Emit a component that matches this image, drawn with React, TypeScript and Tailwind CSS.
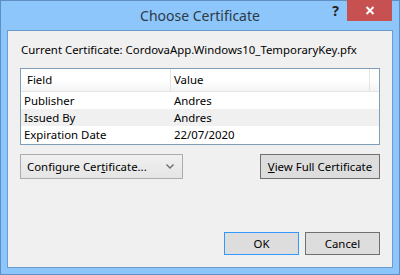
import React from 'react';

const rows = [
  { field: 'Publisher', value: 'Andres' },
  { field: 'Issued By', value: 'Andres' },
  { field: 'Expiration Date', value: '22/07/2020' },
];

const App: React.FC = () => {
  return (
    <div
      className="w-[400px] h-[275px] bg-[#8cc6fa] border border-[#5f8fc0] px-[6px] pb-[6px] flex flex-col text-[11.4px] text-black"
      style={{ fontFamily: '"Noto Sans", "Open Sans", sans-serif' }}
    >
      {/* title bar */}
      <div className="relative h-[29px] flex items-center justify-center shrink-0">
        <span className="text-[14px] text-[#2e3a46] leading-none pt-[1px]">Choose Certificate</span>
        <span className="absolute right-[54px] top-[3px] text-[14px] font-bold text-[#222] leading-none">?</span>
        <div className="absolute right-[1px] top-[-1px] w-[45px] h-[21px] bg-[#c75050] flex items-center justify-center">
          <svg width="10" height="9" viewBox="0 0 10 9">
            <path d="M1.5 1 L8.5 8 M8.5 1 L1.5 8" stroke="#fff" strokeWidth="2" />
          </svg>
        </div>
      </div>

      {/* client area */}
      <div className="flex-1 bg-[#f0f0f0] border border-[#6a9cd0] px-[12px] pt-[11px] pb-[12px] flex flex-col">
        <div className="h-[16px] leading-[16px] pl-[1px]">
          Current Certificate: CordovaApp.Windows10_TemporaryKey.pfx
        </div>

        <div className="mt-[10px] border border-[#7f9db9] bg-white">
          <div className="flex h-[23px] bg-gradient-to-b from-white from-50% to-[#f3f4f6] border-b border-[#e5e5e5]">
            <div className="w-[150px] border-r border-[#e5e5e5] flex items-center pl-[6px]">Field</div>
            <div className="w-[199px] border-r border-[#e5e5e5] flex items-center pl-[3px]">Value</div>
            <div className="flex-1" />
          </div>
          {rows.map((r, i) => (
            <div
              key={r.field}
              className={`flex h-[17px] items-center ${i % 2 === 1 ? 'bg-[#f0f0f0]' : 'bg-white'}`}
            >
              <div className="w-[150px] pl-[3px]">{r.field}</div>
              <div className="pl-[3px]">{r.value}</div>
            </div>
          ))}
          <div className="h-[1px]" />
        </div>

        <div className="mt-[9px] flex justify-between">
          <div className="w-[163px] h-[25px] border border-[#acacac] bg-gradient-to-b from-[#f0f0f0] to-[#e5e5e5] flex items-center justify-between pl-[6px] pr-[8px]">
            <span>
              Configure Cer<span className="underline">t</span>ificate...
            </span>
            <svg width="8" height="5" viewBox="0 0 8 5">
              <path d="M0.5 0.5 L4 4 L7.5 0.5" stroke="#6b6b6b" strokeWidth="1.3" fill="none" />
            </svg>
          </div>
          <div className="w-[120px] h-[25px] border border-[#707070] bg-[#dddddd] flex items-center justify-center">
            <span>
              <span className="underline">V</span>iew Full Certificate
            </span>
          </div>
        </div>

        <div className="mt-auto flex justify-end gap-[6px]">
          <div className="w-[75px] h-[23px] border border-[#3399ff] bg-[#dddddd] flex items-center justify-center">
            OK
          </div>
          <div className="w-[75px] h-[23px] border border-[#707070] bg-[#dddddd] flex items-center justify-center">
            Cancel
          </div>
        </div>
      </div>
    </div>
  );
};

export default App;
